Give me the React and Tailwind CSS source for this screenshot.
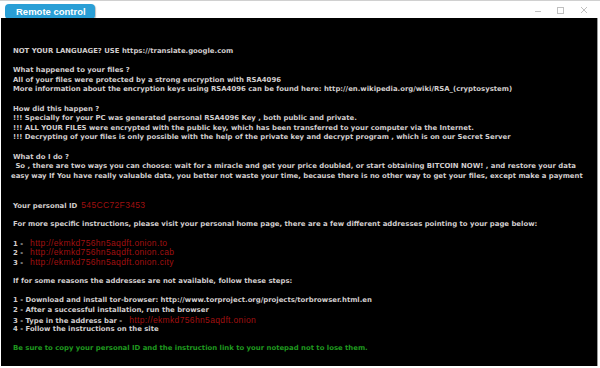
const RED = "text-[#a01010]";

const lines = [
  { t: "NOT YOUR LANGUAGE? USE https://translate.google.com" },
  null,
  { t: "What happened to your files ?" },
  { t: "All of your files were protected by a strong encryption with RSA4096" },
  { t: "More information about the encryption keys using RSA4096 can be found here: http://en.wikipedia.org/wiki/RSA_(cryptosystem)" },
  null,
  { t: "How did this happen ?" },
  { t: "!!! Specially for your PC was generated personal RSA4096 Key , both public and private." },
  { t: "!!! ALL YOUR FILES were encrypted with the public key, which has been transferred to your computer via the Internet." },
  { t: "!!! Decrypting of your files is only possible with the help of the private key and decrypt program , which is on our Secret Server" },
  null,
  { t: "What do I do ?" },
  { t: " So , there are two ways you can choose: wait for a miracle and get your price doubled, or start obtaining BITCOIN NOW! , and restore your data" },
  { t: "easy way If You have really valuable data, you better not waste your time, because there is no other way to get your files, except make a payment", cls: "-ml-[2px]" },
  null,
  null,
  { t: "Your personal ID", red: "545CC72F3453", gap: "ml-[4px]" },
  null,
  { t: "For more specific instructions, please visit your personal home page, there are a few different addresses pointing to your page below:" },
  null,
  { t: "1 -", red: "http://ekmkd756hn5aqdft.onion.to", gap: "ml-[7px]" },
  { t: "2 -", red: "http://ekmkd756hn5aqdft.onion.cab", gap: "ml-[7px]" },
  { t: "3 -", red: "http://ekmkd756hn5aqdft.onion.city", gap: "ml-[7px]" },
  null,
  { t: "If for some reasons the addresses are not available, follow these steps:" },
  null,
  { t: "1 - Download and install tor-browser: http://www.torproject.org/projects/torbrowser.html.en" },
  { t: "2 - After a successful installation, run the browser" },
  { t: "3 - Type in the address bar -", red: "http://ekmkd756hn5aqdft.onion", gap: "ml-[7px]" },
  { t: "4 - Follow the instructions on the site" },
  null,
  { t: "Be sure to copy your personal ID and the instruction link to your notepad not to lose them.", green: true },
];

export default function App() {
  return (
    <div className="w-[600px] h-[368px] bg-white flex flex-col border-t border-[#d0d0d0] font-['DejaVu_Sans',sans-serif]">
      {/* title bar */}
      <div className="h-[17px] flex items-start justify-between">
        <div className="mt-[3px] ml-[5px] h-[15px] w-[90px] rounded-[4px] bg-[#2a9fd6] shadow-[1px_1px_1px_rgba(0,0,0,0.25)] flex items-center pl-[11px]">
          <span className="text-white font-bold text-[9.5px] leading-none whitespace-nowrap font-['Liberation_Sans',sans-serif]">Remote control</span>
        </div>
        <div className="flex items-center gap-[16px] mt-[5px] mr-[12px]">
          <div className="w-[6px] h-[1px] bg-[#c0c0c0] mt-[3px]"></div>
          <div className="w-[7px] h-[7px] border border-[#c0c0c0]"></div>
          <svg width="8" height="8" viewBox="0 0 8 8">
            <path d="M1 1L7 7M7 1L1 7" stroke="#c0c0c0" strokeWidth="1" />
          </svg>
        </div>
      </div>

      {/* message */}
      <div className="flex-1 ml-[1px] mr-[2px] mb-[2px] bg-black border-r border-[#9a9a9a] pl-[12px] pt-[29px] text-[#d2cece] font-bold text-[6.9px]">
        {lines.map((l, i) =>
          l === null ? (
            <div key={i} className="h-[9.6px]"></div>
          ) : (
            <div
              key={i}
              className={`h-[9.6px] leading-[9.6px] whitespace-pre ${l.green ? "text-[#1f9a1f]" : ""} ${l.cls || ""}`}
            >
              {l.t}
              {l.red && (
                <span className={`${RED} font-normal font-['Liberation_Sans',sans-serif] text-[8.5px] tracking-[0.35px] ${l.gap}`}>
                  {l.red}
                </span>
              )}
            </div>
          )
        )}
      </div>
    </div>
  );
}
